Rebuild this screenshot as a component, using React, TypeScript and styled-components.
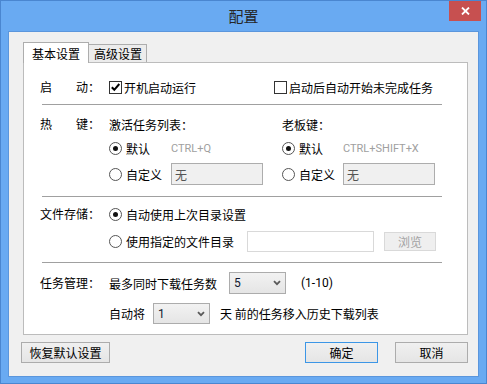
import React from "react";
import styled, { createGlobalStyle, css } from "styled-components";

const GlobalStyle = createGlobalStyle`
  html, body { margin: 0; padding: 0; }
  body {
    font-family: "Noto Sans CJK SC", "Noto Sans", sans-serif;
    font-size: 12px;
    color: #000;
  }
  * { box-sizing: border-box; }
`;

const Frame = styled.div`
  width: 487px;
  height: 384px;
  background: #69aaf2;
  border: 1px solid #4a86d0;
  padding: 0 7px 6px 7px;
  display: flex;
  flex-direction: column;
`;

const TitleBar = styled.div`
  height: 30px;
  flex: none;
  display: grid;
  grid-template-columns: 1fr auto 1fr;
  align-items: start;
`;

const Title = styled.div`
  grid-column: 2;
  font-size: 15px;
  line-height: 30px;
  color: #262626;
`;

const CloseButton = styled.div`
  grid-column: 3;
  justify-self: end;
  width: 32px;
  height: 20px;
  margin-right: -2px;
  background: #c75050;
  display: flex;
  align-items: center;
  justify-content: center;
`;

const Client = styled.div`
  flex: 1;
  background: #f0f0f0;
  border: 1px solid #5b96dc;
  padding: 10px 10px 0 12px;
  display: flex;
  flex-direction: column;
`;

const TabStrip = styled.div`
  display: flex;
  align-items: flex-end;
  height: 20px;
  margin-left: 2px;
`;

const Tab = styled.div<{ $active?: boolean }>`
  position: relative;
  border: 1px solid #adadad;
  border-bottom: none;
  font-size: 12px;
  display: flex;
  align-items: center;
  white-space: nowrap;
  ${(p) =>
    p.$active
      ? css`
          height: 21px;
          margin-bottom: -1px;
          padding: 0 8px;
          background: #fff;
          z-index: 1;
        `
      : css`
          height: 18px;
          padding: 0 4px 0 5px;
          margin-left: -1px;
          background: #ececec;
        `}
`;

const Panel = styled.div`
  margin-left: 2px;
  background: #fff;
  border: 1px solid #bcbcbc;
  padding: 14px 0 10px 16px;
  display: flex;
  flex-direction: column;
`;

const Row = styled.div<{ $h?: number; $mt?: number }>`
  display: flex;
  align-items: center;
  height: ${(p) => p.$h ?? 20}px;
  margin-top: ${(p) => p.$mt ?? 0}px;
  white-space: nowrap;
`;

const Label = styled.div`
  width: 69px;
  flex: none;
  height: 20px;
  line-height: 20px;
`;

const LabelGap = styled.span`
  display: inline-block;
  margin-right: 24px;
`;

const Separator = styled.div<{ $mt: number }>`
  margin-top: ${(p) => p.$mt}px;
  margin-left: 2px;
  width: 400px;
  height: 1px;
  background: #a0a0a0;
  flex: none;
`;

const CheckItem = styled.label<{ $w?: number }>`
  display: flex;
  align-items: center;
  gap: 2px;
  ${(p) => (p.$w ? `width: ${p.$w}px;` : "")}
  flex: none;
`;

const Box = styled.span`
  width: 13px;
  height: 13px;
  border: 1px solid #333;
  background: #fff;
  display: flex;
  align-items: center;
  justify-content: center;
  flex: none;
`;

const RadioItem = styled.label<{ $w?: number }>`
  display: flex;
  align-items: center;
  gap: 4px;
  ${(p) => (p.$w ? `width: ${p.$w}px;` : "")}
  flex: none;
`;

const RadioDot = styled.span<{ $checked?: boolean }>`
  width: 13px;
  height: 13px;
  border-radius: 50%;
  border: 1px solid #555;
  background: #fff;
  display: flex;
  align-items: center;
  justify-content: center;
  flex: none;
  &::after {
    content: "";
    width: 5px;
    height: 5px;
    border-radius: 50%;
    background: ${(p) => (p.$checked ? "#111" : "transparent")};
  }
`;

const Hint = styled.span`
  font-family: Roboto, "Noto Sans", sans-serif;
  font-size: 11px;
  color: #a0a0a0;
`;

const HotkeySection = styled.div`
  display: flex;
  margin-top: 9px;
`;

const HotkeyGroup = styled.div<{ $w?: number }>`
  display: flex;
  flex-direction: column;
  ${(p) => (p.$w ? `width: ${p.$w}px;` : "")}
`;

const TextField = styled.div<{ $w: number; $h: number; $disabled?: boolean }>`
  width: ${(p) => p.$w}px;
  height: ${(p) => p.$h}px;
  flex: none;
  border: 1px solid ${(p) => (p.$disabled ? "#adadad" : "#d9d9d9")};
  background: ${(p) => (p.$disabled ? "#f0f0f0" : "#fff")};
  color: #545454;
  padding-left: 3px;
  display: flex;
  align-items: center;
`;

const BrowseButton = styled.div`
  margin-left: 10px;
  width: 52px;
  height: 19px;
  border: 1px solid #d9d9d9;
  background: #efefef;
  color: #a3a3a3;
  display: flex;
  align-items: center;
  justify-content: center;
`;

const SelectBox = styled.div<{ $h: number; $ml: number }>`
  width: 57px;
  height: ${(p) => p.$h}px;
  margin-left: ${(p) => p.$ml}px;
  flex: none;
  border: 1px solid #acacac;
  background: linear-gradient(#f2f2f2, #e5e5e5);
  padding: 0 4px 0 4px;
  display: flex;
  align-items: center;
  justify-content: space-between;
  font-family: Roboto, "Noto Sans", sans-serif;
  font-size: 12px;
  color: #101830;
`;

const Text = styled.span<{ $ml?: number }>`
  margin-left: ${(p) => p.$ml ?? 0}px;
`;

const Latin = styled.span<{ $ml?: number }>`
  margin-left: ${(p) => p.$ml ?? 0}px;
  font-family: Roboto, "Noto Sans", sans-serif;
  font-size: 12px;
`;

const ButtonBar = styled.div`
  display: flex;
  justify-content: space-between;
  margin-top: 7px;
`;

const ButtonGroup = styled.div`
  display: flex;
  gap: 17px;
`;

const Button = styled.div<{ $w: number; $primary?: boolean }>`
  width: ${(p) => p.$w}px;
  height: 21px;
  border: 1px solid ${(p) => (p.$primary ? "#3c96e6" : "#acacac")};
  background: linear-gradient(#f0f0f0, #e5e5e5);
  display: flex;
  align-items: center;
  justify-content: center;
`;

const Check = () => (
  <svg width="11" height="11" viewBox="0 0 11 11">
    <path d="M1.8 5.2 L4.3 7.8 L9.3 2" fill="none" stroke="#000" strokeWidth="2" />
  </svg>
);

const Chevron = () => (
  <svg width="8" height="6" viewBox="0 0 8 6">
    <path d="M1 1.2 L4 4.2 L7 1.2" fill="none" stroke="#5a5a5a" strokeWidth="1.8" />
  </svg>
);

const Select = ({ value, h, ml }: { value: string; h: number; ml: number }) => (
  <SelectBox $h={h} $ml={ml}>
    <span>{value}</span>
    <Chevron />
  </SelectBox>
);

export default function App() {
  return (
    <>
      <GlobalStyle />
      <Frame>
        <TitleBar>
          <Title>配置</Title>
          <CloseButton>
            <svg width="9" height="8" viewBox="0 0 9 8">
              <path d="M1 0.5 L8 7.5 M8 0.5 L1 7.5" stroke="#fff" strokeWidth="1.8" />
            </svg>
          </CloseButton>
        </TitleBar>
        <Client>
          <TabStrip>
            <Tab $active>基本设置</Tab>
            <Tab>高级设置</Tab>
          </TabStrip>
          <Panel>
            <Row>
              <Label>
                <LabelGap>启</LabelGap>动：
              </Label>
              <CheckItem $w={165}>
                <Box>
                  <Check />
                </Box>
                开机启动运行
              </CheckItem>
              <CheckItem>
                <Box />
                启动后自动开始未完成任务
              </CheckItem>
            </Row>
            <Separator $mt={7} />
            <HotkeySection>
              <Label>
                <LabelGap>热</LabelGap>键：
              </Label>
              <HotkeyGroup $w={173}>
                <Row>激活任务列表：</Row>
                <Row $mt={4}>
                  <RadioItem $w={62}>
                    <RadioDot $checked />
                    默认
                  </RadioItem>
                  <Hint>CTRL+Q</Hint>
                </Row>
                <Row $h={22} $mt={5}>
                  <RadioItem $w={62}>
                    <RadioDot />
                    自定义
                  </RadioItem>
                  <TextField $w={92} $h={22} $disabled>
                    无
                  </TextField>
                </Row>
              </HotkeyGroup>
              <HotkeyGroup>
                <Row>老板键：</Row>
                <Row $mt={4}>
                  <RadioItem $w={61}>
                    <RadioDot $checked />
                    默认
                  </RadioItem>
                  <Hint>CTRL+SHIFT+X</Hint>
                </Row>
                <Row $h={22} $mt={5}>
                  <RadioItem $w={61}>
                    <RadioDot />
                    自定义
                  </RadioItem>
                  <TextField $w={92} $h={22} $disabled>
                    无
                  </TextField>
                </Row>
              </HotkeyGroup>
            </HotkeySection>
            <Separator $mt={11} />
            <Row $mt={7}>
              <Label>文件存储：</Label>
              <RadioItem>
                <RadioDot $checked />
                自动使用上次目录设置
              </RadioItem>
            </Row>
            <Row $h={21} $mt={7}>
              <Label />
              <RadioItem $w={138}>
                <RadioDot />
                使用指定的文件目录
              </RadioItem>
              <TextField $w={127} $h={21} />
              <BrowseButton>浏览</BrowseButton>
            </Row>
            <Separator $mt={10} />
            <Row $h={22} $mt={9}>
              <Label>任务管理：</Label>
              <Text>最多同时下载任务数</Text>
              <Select value="5" h={22} ml={12} />
              <Latin $ml={15}>(1-10)</Latin>
            </Row>
            <Row $h={21} $mt={9}>
              <Label />
              <Text>自动将</Text>
              <Select value="1" h={21} ml={8} />
              <Text $ml={10}>天 前的任务移入历史下载列表</Text>
            </Row>
          </Panel>
          <ButtonBar>
            <Button $w={89}>恢复默认设置</Button>
            <ButtonGroup>
              <Button $w={73} $primary>
                确定
              </Button>
              <Button $w={73}>取消</Button>
            </ButtonGroup>
          </ButtonBar>
        </Client>
      </Frame>
    </>
  );
}
